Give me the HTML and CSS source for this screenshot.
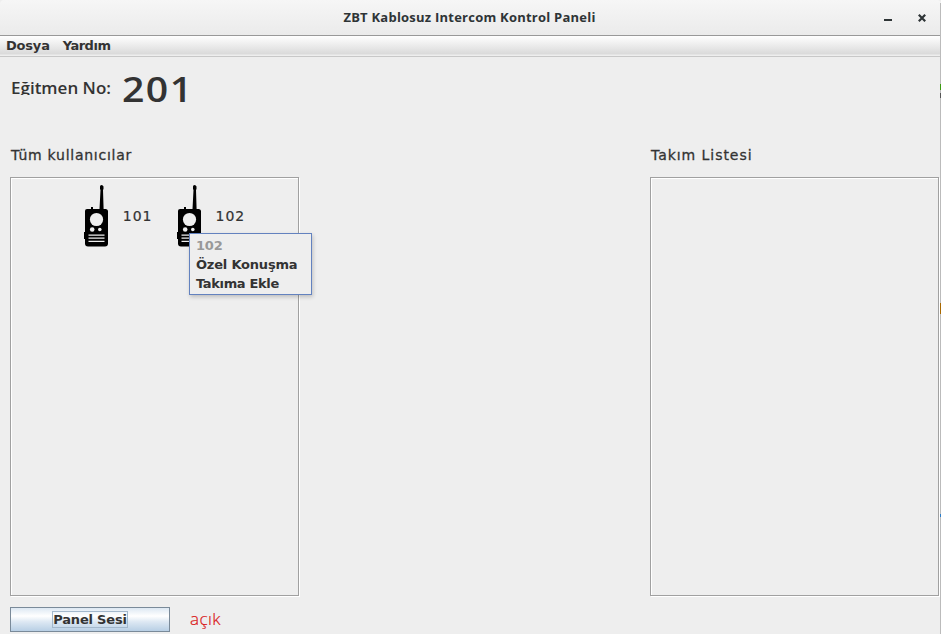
FILE: index.html
```html
<!DOCTYPE html>
<html lang="tr">
<head>
<meta charset="utf-8">
<title>ZBT Kablosuz Intercom Kontrol Paneli</title>
<link rel="stylesheet" href="styles.css">
</head>
<body>
<svg width="0" height="0" class="defs">
  <symbol id="radio" viewBox="0 0 26 64">
    <path d="M17 2.500Q17 1 18.500 1T20.500 2.500V5L20 6L20.600 25H22.500Q25 25 25 27.500V59.500Q25 62.500 22 62.500H5Q2 62.500 2 59.500V55H1V48H2V27Q2 25 4 25H8V23H10V25H16.500L17.500 6L17 5Z"/>
    <g class="cut">
      <circle cx="13.500" cy="35.500" r="6.600"/>
      <circle cx="9.200" cy="45.500" r="2.300"/>
      <circle cx="16.800" cy="45.500" r="1.800"/>
      <path d="M5.500 50.500H21.500V51.700H5.500ZM5.500 53.600H21.500V54.800H5.500ZM5.500 56.800H21.500V58H5.500Z"/>
    </g>
  </symbol>
</svg>
<div class="window">
  <header class="titlebar">
    <h1 class="title">ZBT Kablosuz Intercom Kontrol Paneli</h1>
    <div class="controls">
      <svg width="8" height="10"><path d="M0 8H8V10H0Z"/></svg>
      <svg width="8" height="8"><path class="close" d="M.8 .8L7.200 7.200M7.200 .8L.8 7.200"/></svg>
    </div>
  </header>
  <nav class="menubar"><span class="dosya">Dosya</span><span class="yardim">Yardım</span></nav>
  <main class="content">
    <div class="trainer"><span class="trainer-label">Eğitmen No:</span><span class="trainer-no">201</span></div>
    <div class="columns">
      <section class="column">
        <h2 class="users-title">Tüm kullanıcılar</h2>
        <div class="list">
          <div class="user"><svg width="26" height="64"><use href="#radio"/></svg><span>101</span></div>
          <div class="user"><svg width="26" height="64"><use href="#radio"/></svg><span>102</span></div>
          <div class="popup">
            <div class="popup-title">102</div>
            <div class="popup-talk">Özel Konuşma</div>
            <div class="popup-add">Takıma Ekle</div>
          </div>
        </div>
      </section>
      <section class="column">
        <h2 class="team-title">Takım Listesi</h2>
        <div class="list"></div>
      </section>
    </div>
    <footer class="footer">
      <button class="panel-button"><span>Panel Sesi</span></button>
      <span class="status">açık</span>
    </footer>
  </main>
  <div class="edge"></div>
</div>
</body>
</html>
```
FILE: styles.css
```css
* { box-sizing: border-box; }
body { margin: 0; background: #eee; color: #333; font-family: "DejaVu Sans", sans-serif; }
.defs { position: absolute; }
.cut { fill: #eee; }
.window { position: relative; width: 941px; height: 634px; overflow: hidden; background: #eee; }
.titlebar { height: 36px; display: flex; justify-content: center; position: relative; background: linear-gradient(#f6f6f6, #ebebeb); border-bottom: 1px solid #999; border-radius: 4px 4px 0 0; }
.title { margin: 0; padding-right: 2px; font: bold 13px/34px "Open Sans", sans-serif; letter-spacing: .23px; color: #2e3436; white-space: nowrap; }
.controls { position: absolute; right: 15px; top: 11px; display: flex; gap: 26px; align-items: flex-end; fill: #2e3436; }
.controls svg { display: block; }
.close { fill: none; stroke: #2e3436; stroke-width: 2.2; }
.controls svg:last-child { margin-bottom: -1px; transform: translateY(0); }
.menubar { height: 21px; display: flex; padding-left: 6px; gap: 13px; background: linear-gradient(#fff, #dadada 18px, #eee 19px); border-bottom: 1px solid #c8c8c8; font-size: 13px; font-weight: bold; line-height: 19px; }
.dosya { letter-spacing: -.2px; }
.yardim { letter-spacing: -.5px; }
.content { padding-left: 10px; }
.trainer { display: flex; height: 83px; align-items: flex-start; }
.trainer-label { width: 112px; height: 38px; padding-left: 1px; overflow: hidden; font: 600 17px/62px "Open Sans", sans-serif; white-space: nowrap; }
.trainer-no { font: 600 35px/63px "Open Sans", sans-serif; letter-spacing: 1.3px; transform: scaleX(1.12); transform-origin: left; }
.columns { display: flex; gap: 351px; }
.column { width: 289px; flex: none; }
.column h2 { margin: 0; height: 37px; padding-left: 1px; font-size: 14px; font-weight: normal; line-height: 31px; white-space: nowrap; -webkit-text-stroke: .3px #333; }
.users-title { letter-spacing: .75px; }
.team-title { letter-spacing: .95px; }
.list { position: relative; height: 419px; border: 1px solid #a0a0a0; box-shadow: inset 1px 1px #fff, 1px 1px #fff; display: flex; justify-content: center; gap: 23px; padding: 6px 0 0 19px; }
.user { display: flex; height: 64px; gap: 14px; font-size: 14px; line-height: 64px; }
.user span { letter-spacing: 1px; -webkit-text-stroke: .2px #333; }
.popup { position: absolute; left: 178px; top: 55px; width: 123px; height: 62px; padding: 2px 6px; border: 1px solid #6382bf; background: #eee; font-size: 13px; font-weight: bold; line-height: 19px; letter-spacing: -.2px; box-shadow: 1px 2px 4px #0003; white-space: nowrap; }
.popup-title { color: #999; }
.popup-add { letter-spacing: -.35px; }
.footer { display: flex; padding-top: 11px; gap: 20px; }
.panel-button { width: 160px; height: 25px; padding: 0; display: flex; justify-content: center; align-items: center; border: 1px solid #7a8a99; background: linear-gradient(#dde8f3, #fff 35%, #dde8f3 60%, #b8cfe5); color: #333; font: bold 13px/15px "DejaVu Sans", sans-serif; letter-spacing: -.2px; }
.panel-button span { border: 1px solid #a3b8cc; white-space: nowrap; }
.status { color: #d91414; font: 300 17px/24px "Open Sans", sans-serif; letter-spacing: .4px; -webkit-text-stroke: .2px #d91414; }
.edge { position: absolute; right: 0; top: 3px; width: 1px; height: 631px; background: linear-gradient(transparent 81px, #3a9a10 81px 87px, transparent 87px 90px, #555 90px 95px, transparent 95px 300px, #a86800 300px 311px, transparent 311px 511px, #2a7cc8 511px 514px, transparent 514px), #bbb; }
```
